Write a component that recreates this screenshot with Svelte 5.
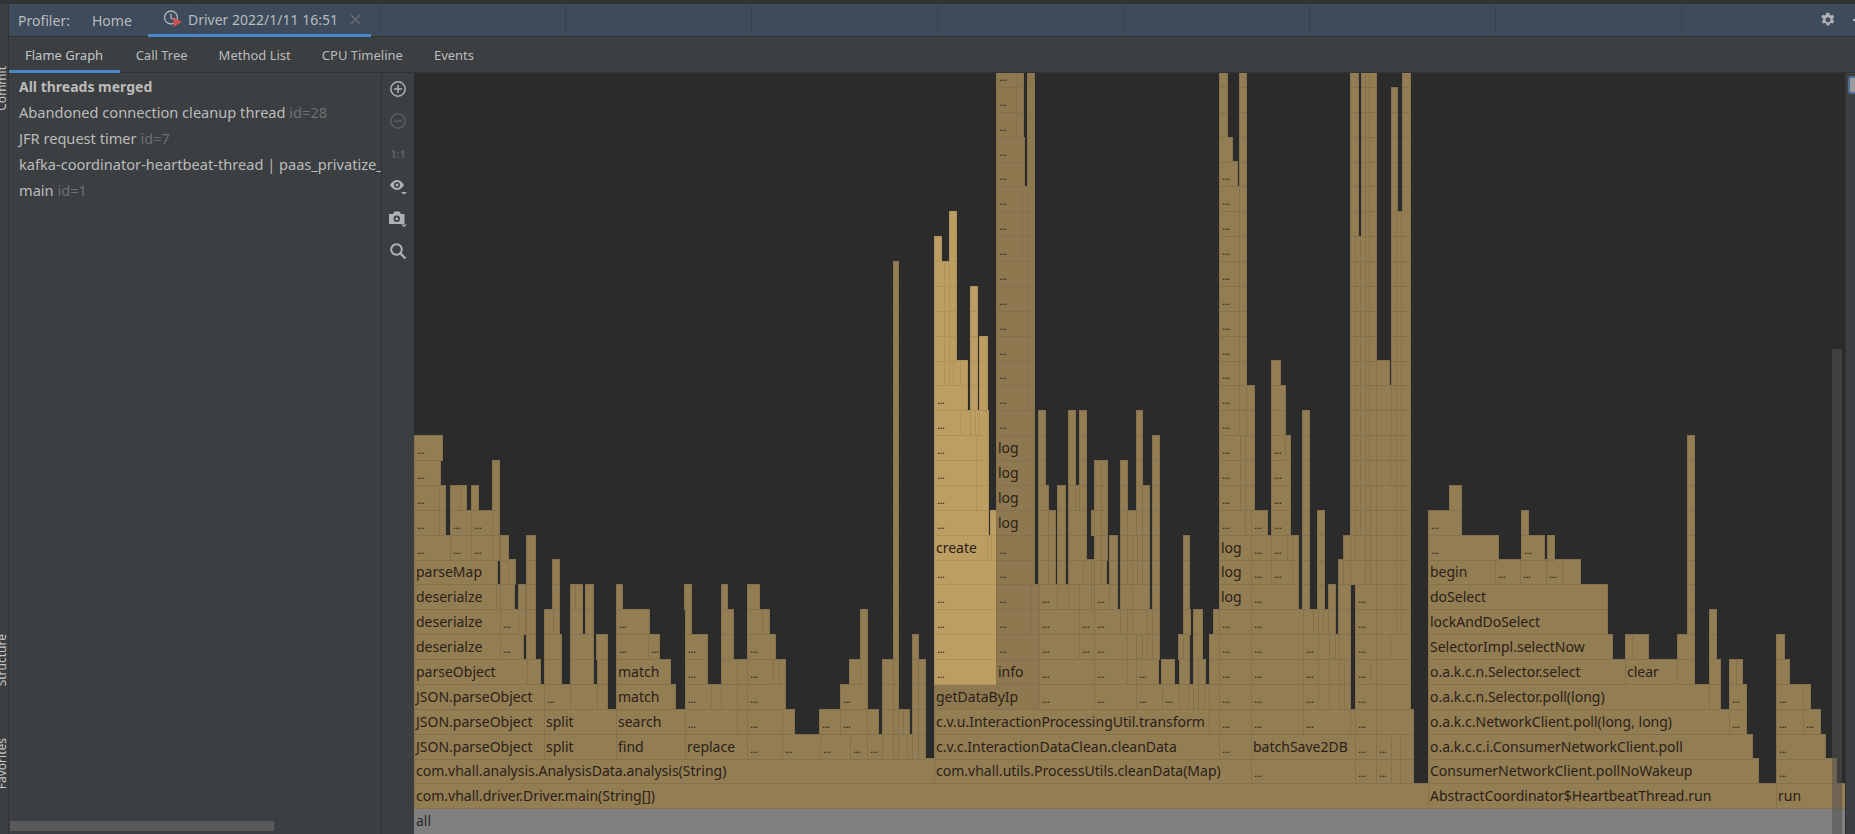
<script>
	// flame graph data, one entry per stack depth: "x0-x1 label" separated by |
	// x values are page pixels, depth 0 is the bottom row
	const CANVAS_X = 414;
	const ROW_H = 24.875;
	const CANVAS_H = 762;
	const rows = [];

	function add(from, to, spec) {
		for (let r = from; r <= to; r++) {
			rows[r] = rows[r] ? rows[r] + '|' + spec : spec;
		}
	}

	// left: AnalysisData
	add(0, 0, '414-1845 all');
	add(1, 1, '414-1428 com.vhall.driver.Driver.main(String[])|1428-1776 AbstractCoordinator$HeartbeatThread.run|1776-1845 run');
	add(2, 2, '414-934 com.vhall.analysis.AnalysisData.analysis(String)|934-1251 com.vhall.utils.ProcessUtils.cleanData(Map)|1251-1355 ...|1355-1376 ...|1376-1391 ...|1391-1400|1400-1413|1428-1758 ConsumerNetworkClient.pollNoWakeup|1776-1836 ...');
	add(3, 3, '414-544 JSON.parseObject|544-616 split|616-685 find|685-747 replace|747-782 ...|782-820 ...|820-850 ...|850-867 ...|867-882 ...|882-893|893-898|898-907|907-912|912-918|918-925');
	add(3, 3, '934-1219 c.v.c.InteractionDataClean.cleanData|1219-1251 ...|1251-1355 batchSave2DB|1355-1376 ...|1376-1391 ...|1391-1400|1400-1413|1428-1752 o.a.k.c.c.i.ConsumerNetworkClient.poll|1776-1825 ...');
	add(4, 4, '414-544 JSON.parseObject|544-616 split|616-685 search|685-737 ...|737-747|747-782 ...|782-794|819-840 ...|840-867 ...|867-878|882-893|893-898|898-903|903-909|912-918|918-925');
	add(4, 4, '934-1209 c.v.u.InteractionProcessingUtil.transform|1209-1219|1219-1251 ...|1251-1303 ...|1303-1350 ...|1350-1355|1355-1376 ...|1376-1413|1428-1729 o.a.k.c.NetworkClient.poll(long, long)|1729-1746 ...|1776-1803 ...|1803-1820 ...');
	add(5, 5, '414-544 JSON.parseObject|544-570 ...|570-597|597-607|616-675 match|685-711 ...|711-721|721-737|737-747|747-785 ...|840-867 ...|882-893|893-898|912-918|918-925');
	add(5, 5, '934-1039 getDataByIp|1039-1094 ...|1094-1136 ...|1136-1162 ...|1162-1179 ...|1179-1188|1188-1193|1193-1198|1198-1204|1204-1209|1209-1219|1219-1251 ...|1251-1303 ...|1303-1318 ...|1318-1329|1329-1339|1339-1344|1344-1350|1355-1376 ...|1376-1410');
	add(5, 5, '1428-1709 o.a.k.c.n.Selector.poll(long)|1709-1720|1729-1746 ...|1776-1803 ...|1803-1810');
	add(6, 6, '414-527 parseObject|527-540|544-561|570-593|597-607|616-670 match|685-707 ...|721-737|737-747|747-773 ...|773-779|779-785|849-860|860-867|882-893|893-898|912-918|918-925');
	add(6, 6, '934-996 ...|996-1039 info|1039-1094 ...|1094-1127 ...|1127-1136|1136-1158 ...|1161-1174|1179-1189|1193-1198|1198-1205|1209-1219|1219-1251 ...|1251-1303 ...|1303-1318 ...|1318-1329|1329-1339|1339-1344|1344-1350|1355-1370 ...|1370-1376|1376-1410');
	add(6, 6, '1428-1625 o.a.k.c.n.Selector.select|1625-1677 clear|1677-1694|1709-1720|1729-1736|1736-1742|1776-1789');
	add(7, 7, '414-500 deserialze|500-523 ...|526-535|544-561|570-593|596-607|616-648 ...|648-659 ...|685-707 ...|721-733|747-775 ...|860-867|893-898|912-918');
	add(7, 7, '934-996 ...|996-1039 ...|1039-1079 ...|1079-1094 ...|1094-1127 ...|1127-1136|1136-1142|1142-1147|1147-1152|1152-1159|1178-1183|1183-1189|1193-1202|1209-1219|1219-1251 ...|1251-1303 ...|1303-1318 ...|1318-1329|1329-1335|1335-1339|1339-1350|1355-1376 ...|1376-1390|1390-1410');
	add(7, 7, '1428-1612 SelectorImpl.selectNow|1625-1632|1632-1648|1677-1694|1709-1716|1776-1784');
	add(8, 8, '414-500 deserialze|500-518 ...|518-525|526-535|544-553|553-559|570-582|585-593|616-649 ...|685-691|721-733|747-762|762-769|860-867|893-898');
	add(8, 8, '934-996 ...|996-1031 ...|1031-1039|1039-1079 ...|1079-1094 ...|1094-1120 ...|1120-1127|1127-1132|1132-1147|1147-1152|1152-1159|1183-1190|1193-1202|1213-1219|1219-1251 ...|1251-1303 ...|1303-1313|1313-1318|1318-1323|1323-1328|1328-1335|1338-1350|1355-1376 ...|1376-1396|1396-1401|1401-1410');
	add(8, 8, '1428-1607 lockAndDoSelect|1687-1694|1709-1716');
	add(9, 9, '414-496 deserialze|496-500|500-514|518-525|526-535|552-559|570-575|575-582|585-593|616-622|684-691|721-727|747-759|893-898');
	add(9, 9, '934-996 ...|996-1031 ...|1031-1039|1039-1057 ...|1057-1068|1068-1079|1079-1091|1091-1094|1094-1109 ...|1109-1117|1120-1132|1132-1149|1152-1159|1183-1189|1219-1251 log|1251-1298 ...|1302-1309|1317-1324|1328-1335|1338-1350|1355-1376 ...|1376-1396|1396-1401|1401-1410');
	add(9, 9, '1428-1607 doSelect|1687-1694');
	add(10, 10, '414-497 parseMap|500-508|508-515|526-535|552-559|893-898');
	add(10, 10, '934-996 ...|996-1034 ...|1038-1048|1048-1055|1057-1065|1068-1083|1083-1091|1091-1094|1094-1101|1101-1106|1109-1117|1120-1127|1127-1132|1132-1137|1137-1142|1142-1149|1152-1159|1183-1189|1219-1251 log|1251-1271 ...|1271-1292 ...|1292-1298|1302-1309|1317-1324|1338-1343|1343-1350|1350-1365|1365-1370|1370-1376|1376-1396|1396-1401|1401-1410');
	add(10, 10, '1428-1495 begin|1495-1520 ...|1520-1546 ...|1546-1562 ...|1562-1580|1687-1694');
	add(11, 11, '414-450 ...|450-471 ...|471-492 ...|492-499|500-508|526-535|893-898');
	add(11, 11, '934-987 create|987-991|991-996|996-1034 ...|1038-1048|1048-1055|1057-1065|1068-1086|1094-1101|1101-1107|1109-1117|1120-1127|1127-1132|1132-1137|1137-1142|1142-1149|1152-1159|1183-1189|1219-1251 log|1251-1271 ...|1271-1287 ...|1287-1292|1292-1298|1302-1309|1317-1324|1343-1350|1350-1355|1355-1365|1365-1370|1370-1376|1376-1396|1396-1401|1401-1410');
	add(11, 11, '1428-1498 ...|1521-1544 ...|1547-1554|1687-1694');
	add(12, 12, '414-439 ...|439-445|450-471 ...|471-492 ...|492-499|893-898');
	add(12, 12, '934-988 ...|990-996|996-1034 log|1038-1048|1048-1055|1057-1065|1068-1086|1091-1094|1094-1101|1101-1107|1120-1127|1127-1136|1136-1142|1142-1149|1152-1159|1219-1245 ...|1245-1251|1251-1267 ...|1271-1290 ...|1302-1309|1317-1324|1350-1355|1355-1360|1360-1365|1365-1370|1370-1376|1376-1396|1396-1401|1401-1410');
	add(12, 12, '1428-1461 ...|1521-1528|1687-1694');
	add(13, 13, '414-439 ...|439-445|450-460|460-466|471-478|492-499|893-898');
	add(13, 13, '934-976 ...|976-988|996-1034 log|1038-1048|1057-1065|1068-1075|1075-1079|1079-1086|1094-1101|1101-1107|1120-1127|1136-1142|1142-1149|1152-1159|1219-1240 ...|1240-1245|1245-1254|1271-1290 ...|1302-1309|1350-1355|1355-1360|1360-1365|1365-1370|1370-1376|1376-1396|1396-1401|1401-1410');
	add(13, 13, '1449-1461|1687-1694');
	add(14, 14, '414-440 ...|492-499|893-898');
	add(15, 15, '414-442 ...|893-898');
	add(14, 15, '934-976 ...|976-988|996-1034 log|1038-1045|1068-1075|1079-1086|1219-1240 ...|1240-1245|1245-1254|1271-1290 ...|1302-1309|1350-1355|1355-1360|1360-1365|1365-1369|1369-1376|1376-1390|1390-1396|1396-1401|1401-1410|1687-1694');
	add(14, 14, '1094-1101|1101-1107|1120-1127|1136-1142|1152-1159');
	add(15, 15, '1136-1142|1152-1159|1285-1290');
	add(16, 16, '934-960 ...|960-970|970-975|975-979|979-988|996-1034 ...|1038-1045|1068-1075|1079-1086|1136-1142|1219-1239 ...|1239-1246|1246-1254|1271-1285|1302-1309');
	add(17, 17, '934-967 ...|970-977|979-987|996-1027 ...|1027-1034|1219-1239 ...|1239-1246|1246-1254|1271-1285');
	add(18, 18, '934-944|944-949|949-953|953-960|960-967|970-977|979-987|996-1027 ...|1027-1034|1219-1239 ...|1239-1246|1271-1280');
	add(19, 19, '934-944|944-949|949-956|970-977|979-987');
	add(20, 21, '934-944|944-949|949-956|970-977');
	add(22, 22, '934-944|944-949|949-956|893-898');
	add(16, 21, '893-898');
	add(23, 23, '934-941|949-956');
	add(24, 24, '949-956');
	add(19, 22, '996-1027 ...|1027-1034|1219-1239 ...|1239-1246');
	add(23, 24, '996-1022 ...|1022-1027|1027-1034|1219-1239 ...|1239-1246');
	add(25, 25, '996-1022 ...|1022-1027|1027-1034|1219-1239 ...|1239-1246');
	add(26, 27, '996-1024 ...|1027-1034|1239-1246');
	add(26, 26, '1219-1237 ...');
	add(27, 27, '1219-1232');
	add(28, 30, '996-1016 ...|1016-1023|1027-1034|1219-1227|1239-1246');
	// right hand bundle of thin columns above batchSave2DB
	add(16, 23, '1350-1355|1355-1360|1360-1365|1365-1369|1369-1376|1391-1396|1396-1401|1401-1410');
	add(16, 17, '1376-1391');
	add(18, 18, '1376-1389');
	add(24, 24, '1350-1358|1361-1365|1365-1369|1369-1376|1391-1396|1396-1401|1401-1410');
	add(25, 29, '1350-1358|1361-1365|1365-1369|1369-1376|1391-1397|1402-1410');
	add(30, 30, '1350-1358|1361-1365|1365-1369|1369-1376|1402-1410');

	const frames = rows.flatMap((spec, row) =>
		spec
			.split('|')
			.filter(Boolean)
			.map((s) => {
				const sp = s.indexOf(' ');
				const range = sp < 0 ? s : s.slice(0, sp);
				const [x0, x1] = range.split('-').map(Number);
				const label = sp < 0 ? '' : s.slice(sp + 1);
				return { row, x0, x1, label };
			})
	);

	function kind(f) {
		if (f.row === 0) return 'root';
		if (f.x0 >= 934 && f.x1 <= 996 && f.row >= 6) return 'hot';
		if (f.x0 >= 934 && f.x1 <= 1039 && f.row >= 5) return 'dim';
		return '';
	}

	const threads = [
		{ name: 'All threads merged', bold: true },
		{ name: 'Abandoned connection cleanup thread', id: 'id=28' },
		{ name: 'JFR request timer', id: 'id=7' },
		{ name: 'kafka-coordinator-heartbeat-thread | paas_privatize_report_group', id: 'id=31' },
		{ name: 'main', id: 'id=1' }
	];

	const subTabs = ['Flame Graph', 'Call Tree', 'Method List', 'CPU Timeline', 'Events'];
</script>

<div class="app">
	<div class="top-strip"></div>
	<div class="body">
		<div class="edge">
			<span class="edge-text commit">Commit</span>
			<span class="edge-text structure">Structure</span>
			<span class="edge-text favorites">Favorites</span>
		</div>
		<div class="main">
			<div class="run-tabs">
				<span class="title">Profiler:</span>
				<span class="home">Home</span>
				<div class="run-tab">
					<svg width="20" height="20" viewBox="0 0 20 20">
						<circle cx="8" cy="8.500" r="6.500" fill="none" stroke="#afb1b3" stroke-width="1.400" />
						<path d="M8 4.500V9l2.600 1.500" fill="none" stroke="#afb1b3" stroke-width="1.300" />
						<path d="M10.500 8L19 13l-8.500 5z" fill="#c75450" />
					</svg>
					<span>Driver 2022/1/11 16:51</span>
					<svg class="close" width="11" height="11" viewBox="0 0 11 11">
						<path d="M1 1l9 9M10 1l-9 9" stroke="#6e7072" stroke-width="1.100" />
					</svg>
				</div>
				<svg class="gear" width="16" height="16" viewBox="0 0 16 16">
					<path
						fill="#afb1b3"
						fill-rule="evenodd"
						d="M6.600.8h2.800l.4 2 1.200.7 1.900-.7 1.400 2.400-1.500 1.300v1.400l1.500 1.300-1.400 2.400-1.900-.7-1.200.7-.4 2H6.600l-.4-2-1.200-.7-1.900.7-1.400-2.400 1.500-1.300V6.500L1.200 5.200l1.400-2.400 1.900.7 1.200-.7zM8 5.300a2.500 2.500 0 1 0 0 5 2.500 2.500 0 0 0 0-5z"
					/>
				</svg>
				<span class="cut-dash"></span>
			</div>
			<div class="sub-tabs">
				{#each subTabs as tab, i}
					<span class="sub-tab" class:active={i === 0}>{tab}</span>
				{/each}
			</div>
			<div class="content">
				<div class="threads">
					{#each threads as t}
						<div class="thread" class:bold={t.bold}>
							{t.name}
							{#if t.id}<span class="tid">{t.id}</span>{/if}
						</div>
					{/each}
					<div class="hscroll"></div>
				</div>
				<div class="tools">
					<svg width="18" height="18" viewBox="0 0 18 18">
						<circle cx="9" cy="9" r="7.200" fill="none" stroke="#afb1b3" stroke-width="1.500" />
						<path d="M9 5v8M5 9h8" stroke="#afb1b3" stroke-width="1.500" />
					</svg>
					<svg width="18" height="18" viewBox="0 0 18 18">
						<circle cx="9" cy="9" r="7.200" fill="none" stroke="#5b5e60" stroke-width="1.500" />
						<path d="M5 9h8" stroke="#5b5e60" stroke-width="1.500" />
					</svg>
					<span class="one-to-one">1:1</span>
					<svg width="20" height="18" viewBox="0 0 20 18">
						<path d="M2 8c2-3.500 4.500-5 7-5s5 1.500 7 5c-2 3.500-4.500 5-7 5s-5-1.500-7-5z" fill="#afb1b3" />
						<circle cx="9" cy="8" r="3" fill="#3c3f41" />
						<circle cx="9" cy="8" r="1.500" fill="#afb1b3" />
						<path d="M13 15h6l-3 2.500z" fill="#afb1b3" />
					</svg>
					<svg width="20" height="18" viewBox="0 0 20 18">
						<path d="M1 4h4l1.500-2.500h5L13 4h3.500v10H1z" fill="#afb1b3" />
						<circle cx="8.800" cy="8.700" r="3.200" fill="#3c3f41" />
						<circle cx="8.800" cy="8.700" r="1.500" fill="#afb1b3" />
						<path d="M13 14.500h6l-3 2.500z" fill="#afb1b3" />
					</svg>
					<svg width="18" height="18" viewBox="0 0 18 18">
						<circle cx="7.500" cy="7.500" r="5.300" fill="none" stroke="#afb1b3" stroke-width="2" />
						<path d="M11.500 11.500l5 5" stroke="#afb1b3" stroke-width="2.400" />
					</svg>
				</div>
				<div class="canvas">
					{#each frames as f}
						<div
							class="frame {kind(f)}"
							style="left:{f.x0 - CANVAS_X}px;top:{CANVAS_H - 2 - ROW_H * (f.row + 1)}px;width:{f.x1 - f.x0 + 1}px"
						>
							{#if f.label === '...'}<span class="dots">...</span>{:else}{f.label}{/if}
						</div>
					{/each}
					<div class="vscroll"></div>
				</div>
				<div class="stripe">
					<div class="marker"></div>
				</div>
			</div>
		</div>
	</div>
</div>

<style>
	:global(body) {
		margin: 0;
		background: #3c3f41;
	}

	.app {
		display: flex;
		flex-direction: column;
		width: 1855px;
		height: 834px;
		overflow: hidden;
		font-family: 'Noto Sans', 'Liberation Sans', sans-serif;
		font-size: 13px;
		color: #bbbbbb;
	}

	.top-strip {
		height: 4px;
		flex: none;
		background: #313335;
	}

	.body {
		display: flex;
		flex: 1;
		min-height: 0;
	}

	.edge {
		position: relative;
		flex: none;
		width: 8px;
		border-right: 1px solid #323232;
		overflow: hidden;
	}

	.edge-text {
		position: absolute;
		left: -7px;
		writing-mode: vertical-rl;
		transform: rotate(180deg);
		font-size: 12px;
		color: #c4c6c8;
	}

	.commit {
		top: 62px;
	}

	.structure {
		top: 630px;
	}

	.favorites {
		top: 734px;
	}

	.main {
		display: flex;
		flex-direction: column;
		flex: 1;
		min-width: 0;
	}

	.run-tabs {
		display: flex;
		align-items: center;
		flex: none;
		height: 32px;
		padding-left: 9px;
		border-bottom: 1px solid #323232;
		font-size: 14px;
		background-color: #3d4b5c;
		background-image: repeating-linear-gradient(
			90deg,
			transparent 0 185px,
			#38414d 185px 186px
		);
		background-position: -1px 0;
	}

	.title {
		width: 74px;
	}

	.home {
		width: 56px;
	}

	.run-tab {
		display: flex;
		align-items: center;
		align-self: stretch;
		gap: 5px;
		width: 223px;
		box-sizing: border-box;
		padding-left: 15px;
		border-bottom: 3px solid #4a88c7;
		margin-bottom: -1px;
		white-space: nowrap;
	}

	.close {
		margin-left: 7px;
		flex: none;
	}

	.gear {
		margin-left: auto;
		margin-right: 17px;
	}

	.cut-dash {
		width: 2px;
		height: 2px;
		background: #afb1b3;
	}

	.sub-tabs {
		display: flex;
		flex: none;
		height: 35px;
		border-bottom: 1px solid #323232;
		box-sizing: border-box;
		margin-top: 1px;
	}

	.sub-tab {
		padding: 8px 15.5px 0;
		white-space: nowrap;
	}

	.sub-tab.active {
		color: #c4c6c8;
		padding: 8px 17px 0 16px;
		height: 24px;
		border-bottom: 3px solid #4a88c7;
		margin-bottom: -1px;
	}

	.content {
		display: flex;
		flex: 1;
		min-height: 0;
	}

	.threads {
		position: relative;
		flex: none;
		width: 373px;
		box-sizing: border-box;
		padding-top: 1px;
		border-right: 1px solid #323232;
		font-size: 14.6px;
		overflow: hidden;
	}

	.thread {
		height: 26px;
		line-height: 25px;
		padding-left: 10px;
		white-space: nowrap;
	}

	.thread.bold {
		font-size: 14px;
		font-weight: 700;
	}

	.tid {
		color: #6d6f71;
	}

	.hscroll {
		position: absolute;
		left: 1px;
		bottom: 3px;
		width: 264px;
		height: 10px;
		background: #59595b;
	}

	.tools {
		display: flex;
		flex-direction: column;
		align-items: center;
		gap: 14.4px;
		flex: none;
		width: 32px;
		box-sizing: border-box;
		padding-top: 7px;
	}

	.one-to-one {
		height: 18px;
		line-height: 18px;
		font-size: 11px;
		font-weight: 700;
		color: #5b5e60;
	}

	.canvas {
		position: relative;
		flex: 1;
		background: #2b2b2b;
		overflow: hidden;
	}

	.frame {
		position: absolute;
		height: 26px;
		box-sizing: border-box;
		padding-left: 1px;
		border: 1px solid #85714d;
		background: #937d53;
		color: #2b2118;
		font-size: 14px;
		line-height: 23px;
		white-space: nowrap;
		overflow: hidden;
	}

	.frame.hot {
		background: #bc9e63;
		border-color: #ad925c;
	}

	.frame.dim {
		background: #8e7850;
	}

	.frame.root {
		background: #808080;
		border-color: #808080;
		color: #2b2b2b;
	}

	.dots {
		font-size: 11px;
		letter-spacing: -0.5px;
		margin-left: 1px;
		line-height: 28px;
	}

	.vscroll {
		position: absolute;
		top: 276px;
		right: 3px;
		bottom: 0;
		width: 10px;
		background: rgb(80 80 80 / 0.55);
	}

	.stripe {
		position: relative;
		flex: none;
		width: 9px;
		border-left: 1px solid #323232;
	}

	.marker {
		position: absolute;
		top: 3px;
		left: 2px;
		width: 7px;
		height: 18px;
		box-sizing: border-box;
		border: 2px solid #4a6d96;
		border-right: 0;
		border-radius: 3px 0 0 3px;
		background: #9a9a9a;
	}
</style>
